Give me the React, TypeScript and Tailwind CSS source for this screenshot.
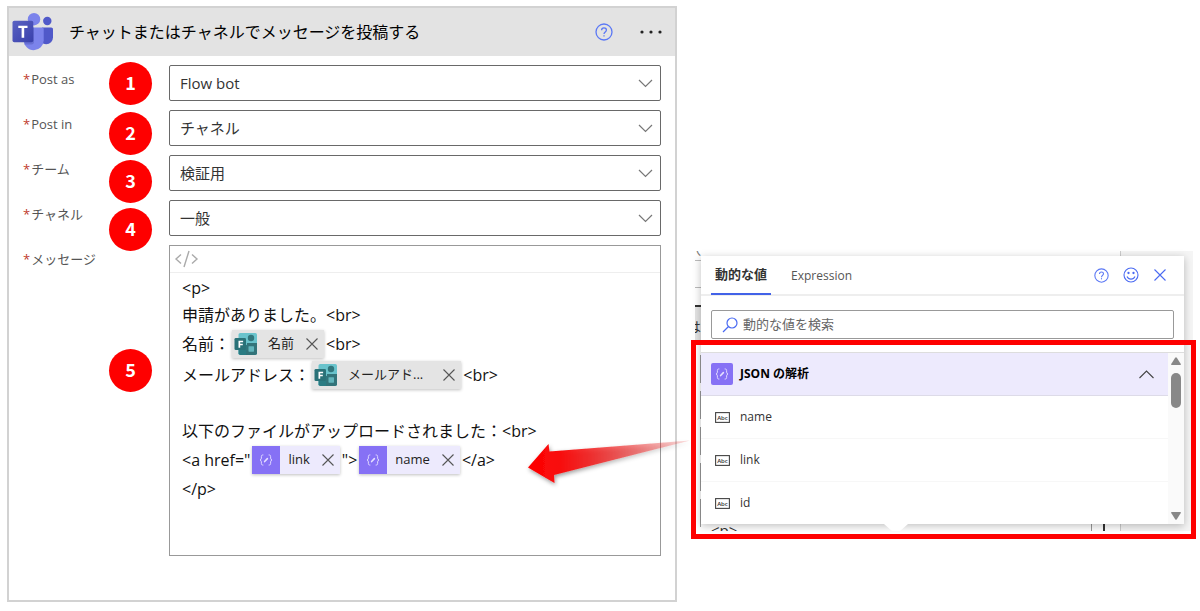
import { useState } from "react";
import type { ReactNode } from "react";

interface Field {
  id: string;
  label: string;
  options: string[];
}

const FIELDS: Field[] = [
  { id: "post-as", label: "Post as", options: ["Flow bot", "User"] },
  { id: "post-in", label: "Post in", options: ["チャネル", "グループ チャット"] },
  { id: "team", label: "チーム", options: ["検証用"] },
  { id: "channel", label: "チャネル", options: ["一般"] },
];

const VALUES = ["name", "link", "id"];

function TeamsLogo() {
  return (
    <svg width="42" height="40" viewBox="0 0 42 40" aria-hidden="true">
      <defs>
        <linearGradient id="teams-tile" x1="0" y1="0" x2="1" y2="1">
          <stop offset="0" stopColor="#5a62c3" />
          <stop offset="1" stopColor="#3940ab" />
        </linearGradient>
      </defs>
      <circle cx="35.3" cy="9" r="4.2" fill="#5059c9" />
      <path d="M30 15.5h9.2c1 0 1.8.8 1.8 1.8v8.2a6.8 6.8 0 0 1-6.8 6.8c-2 0-3.6-.8-4.2-2z" fill="#5059c9" />
      <circle cx="22" cy="7.2" r="6.2" fill="#7b83eb" />
      <path d="M13 15.5h17c1 0 1.7.8 1.7 1.7v11a10 10 0 0 1-10 10c-5.5 0-9.9-4.5-9.9-10V16.5z" fill="#7b83eb" />
      <path d="M12 15.5h10v14.5c0 1.5-1 2.5-2.5 2.5h-7z" fill="#4f57b5" opacity=".45" />
      <rect x=".5" y="8.7" width="20.8" height="21.5" rx="1.8" fill="url(#teams-tile)" />
      <path d="M6.3 13.7h9.2v2.3h-3.3v9.7H9.6V16H6.3z" fill="#fff" />
    </svg>
  );
}

function FormsLogo() {
  return (
    <svg width="24" height="24" viewBox="0 0 24 24" aria-hidden="true">
      <rect x="4.5" y="1" width="18.5" height="22" rx="1.8" fill="#69c3cc" />
      <path d="M4.5 13H13v10H6.3a1.8 1.8 0 0 1-1.8-1.8z" fill="#2b7c83" />
      <path d="M13 11h10v10.2a1.8 1.8 0 0 1-1.8 1.8H12z" fill="#33747a" />
      <circle cx="17" cy="6" r="3.2" fill="#31767c" />
      <rect x="14.5" y="14.2" width="5.5" height="5.5" rx=".6" fill="#62b5bc" />
      <rect x=".5" y="6" width="11.5" height="12" rx="1.3" fill="#2a7278" />
      <path d="M4.5 8.8h4.6v1.5H6.2v1.4h2.6v1.5H6.2v2.6H4.5z" fill="#fff" />
    </svg>
  );
}

function BracesIcon() {
  return (
    <svg
      width="14"
      height="12"
      viewBox="0 0 15 13"
      fill="none"
      stroke="#e6e0ff"
      strokeWidth="1"
      strokeLinecap="round"
      aria-hidden="true"
    >
      <path d="M4.2 1C2.8 1 2.5 1.7 2.5 2.8v1.7c0 1-.5 1.700-1.500 2 1 .3 1.500 1 1.500 2v1.700c0 1.100.3 1.800 1.700 1.800" />
      <path d="M10.8 1c1.400 0 1.700.7 1.700 1.800v1.700c0 1 .5 1.700 1.500 2-1 .3-1.500 1-1.500 2v1.700c0 1.100-.3 1.800-1.700 1.800" />
      <path d="M6 8.200l3-3.200" strokeWidth="1.700" />
    </svg>
  );
}

function HelpIcon({ size }: { size: number }) {
  return (
    <svg width={size} height={size} viewBox="0 0 18 18" fill="none" stroke="#5b78f5" strokeWidth="1.3" aria-hidden="true">
      <circle cx="9" cy="9" r="8" />
      <path d="M6.6 7.200c0-1.500 1-2.400 2.400-2.400s2.400.9 2.400 2.200c0 1.900-2.400 2-2.400 4.100" />
      <path d="M9 12.200v1.400" />
    </svg>
  );
}

function SmileIcon() {
  return (
    <svg width="16" height="16" viewBox="0 0 16 16" fill="none" stroke="#4a6af2" strokeWidth="1.1" aria-hidden="true">
      <circle cx="8" cy="8" r="7" />
      <path d="M4 9.500c.8 1.700 2.200 2.600 4 2.600s3.200-.9 4-2.600" />
      <circle cx="5.5" cy="6" r=".6" fill="#4a6af2" />
      <circle cx="10.5" cy="6" r=".6" fill="#4a6af2" />
    </svg>
  );
}

function CrossIcon({ color }: { color: string }) {
  return (
    <svg width="12" height="12" viewBox="0 0 12 12" stroke={color} strokeWidth="1.1" aria-hidden="true">
      <path d="M.5.5l11 11M11.5.5l-11 11" />
    </svg>
  );
}

function AbcIcon() {
  return (
    <svg width="15" height="11" viewBox="0 0 15 11" aria-hidden="true">
      <rect x=".6" y=".6" width="13.8" height="9.8" fill="#fff" stroke="#444" strokeWidth="1.1" />
      <text x="7.5" y="7.8" textAnchor="middle" fontSize="6" fontWeight="600" fill="#333" fontFamily="Open Sans, sans-serif">
        Abc
      </text>
    </svg>
  );
}

function Token({ label, kind }: { label: string; kind: "forms" | "json" }) {
  const isJson = kind === "json";
  return (
    <span
      className={`mx-0.5 inline-flex h-7 items-center pr-1.5 text-[13px] text-[#222] shadow-[0_1px_3px_rgba(0,0,0,0.25)] ${
        isJson ? "bg-[#edeafd]" : "bg-[#e4e4e4]"
      }`}
    >
      <span className={`flex h-7 w-7 items-center justify-center ${isJson ? "bg-[#8671f5]" : ""}`}>
        {isJson ? <BracesIcon /> : <FormsLogo />}
      </span>
      <span className="ml-2">{label}</span>
      <button type="button" aria-label={`${label} を削除`} className={label.length > 4 ? "ml-5" : "ml-3"}>
        <CrossIcon color="#555" />
      </button>
    </span>
  );
}

function Line({ children, tall = false }: { children?: ReactNode; tall?: boolean }) {
  return <div className={`flex items-center whitespace-pre ${tall ? "h-[31px]" : "h-[27px]"}`}>{children}</div>;
}

function FieldLabel({ id, children }: { id: string; children: string }) {
  return (
    <label id={`${id}-label`} htmlFor={id} className="w-[146px] shrink-0 pt-1 text-[13px] leading-5 text-[#555]">
      <span className="mr-px text-[#c0392b]">*</span>
      {children}
    </label>
  );
}

function Badge({ n, className = "" }: { n: number; className?: string }) {
  return (
    <li
      className={`flex h-[43px] w-[43px] items-center justify-center rounded-full bg-[#fe0000] pb-1 font-['Noto_Sans_CJK_JP',sans-serif] text-lg leading-none font-bold text-white ${className}`}
    >
      {n}
    </li>
  );
}

function ActionCard() {
  return (
    <section className="min-w-0 flex-1 border-2 border-[#d2d2d2] bg-white pb-11">
      <header className="flex h-12 items-center bg-[#e3e3e3] pr-3 pl-[3px]">
        <TeamsLogo />
        <h1 className="ml-[15px] flex-1 text-base whitespace-nowrap text-black">チャットまたはチャネルでメッセージを投稿する</h1>
        <button type="button" aria-label="ヘルプ" className="mr-6.5">
          <HelpIcon size={18} />
        </button>
        <button type="button" aria-label="メニュー">
          <svg width="24" height="4" viewBox="0 0 24 4" fill="#222" aria-hidden="true">
            <circle cx="3" cy="2" r="1.6" />
            <circle cx="12" cy="2" r="1.6" />
            <circle cx="21" cy="2" r="1.6" />
          </svg>
        </button>
      </header>

      <div className="relative flex flex-col gap-[9px] px-3.5 pt-[9px]">
        {FIELDS.map((f) => (
          <div key={f.id} className="flex">
            <FieldLabel id={f.id}>{f.label}</FieldLabel>
            <div className="relative flex-1">
              <select
                id={f.id}
                className="block h-9 w-full appearance-none rounded-xs border border-[#696969] bg-white px-2.5 text-[15px] text-[#333]"
              >
                {f.options.map((o) => (
                  <option key={o}>{o}</option>
                ))}
              </select>
              <svg
                className="pointer-events-none absolute top-3.5 right-2"
                width="15"
                height="9"
                viewBox="0 0 15 9"
                fill="none"
                stroke="#777"
                strokeWidth="1.2"
                aria-hidden="true"
              >
                <path d="M1 1l6.500 6.500L14 1" />
              </svg>
            </div>
          </div>
        ))}

        <div className="flex">
          <FieldLabel id="message">メッセージ</FieldLabel>
          <div className="min-h-[311px] min-w-0 flex-1 border border-[#999]">
            <div className="flex h-[27px] items-center border-b border-[#eee] pl-1">
              <button type="button" aria-label="コード ビュー">
                <svg width="25" height="18" viewBox="0 0 25 18" fill="none" stroke="#aaa" strokeWidth="1.4" aria-hidden="true">
                  <path d="M7 4.500L2 9l5 4.500M18 4.500L23 9l-5 4.500M15 1l-5 16" />
                </svg>
              </button>
            </div>
            <div
              id="message"
              role="textbox"
              aria-multiline="true"
              aria-labelledby="message-label"
              className="px-3 pt-px text-base text-[#111]"
            >
              <Line>{"<p>"}</Line>
              <Line>{"申請がありました。<br>"}</Line>
              <Line tall>
                名前：
                <Token label="名前" kind="forms" />
                {"<br>"}
              </Line>
              <Line tall>
                メールアドレス：
                <Token label="メールアド..." kind="forms" />
                {"<br>"}
              </Line>
              <Line />
              <Line>{"以下のファイルがアップロードされました：<br>"}</Line>
              <Line tall>
                {'<a href="'}
                <Token label="link" kind="json" />
                {'">'}
                <Token label="name" kind="json" />
                {"</a>"}
              </Line>
              <Line>{"</p>"}</Line>
            </div>
          </div>
        </div>

        {/* Step numbers laid over the form */}
        <ol className="pointer-events-none absolute top-1.5 left-[100px] flex flex-col gap-[5px]">
          <Badge n={1} />
          <Badge n={2} className="mt-0.5" />
          <Badge n={3} />
          <Badge n={4} />
          <Badge n={5} className="mt-[93px]" />
        </ol>
      </div>
    </section>
  );
}

// Sliver of the editor that shows around the popup
function Backdrop() {
  return (
    <div aria-hidden="true" className="absolute top-0 right-[3px] left-1 h-[280px] overflow-hidden bg-white text-[#333]">
      <div className="absolute inset-y-0 right-0 w-[73px] border-l border-[#ccc] bg-[#f5f5f5]" />
      <span className="absolute -top-3 -left-2 text-sm text-[#777]">択</span>
      <div className="absolute top-[9px] left-0 h-px w-2 bg-[#bbb]" />
      <div className="absolute top-9 left-0 h-px w-2 bg-[#bbb]" />
      <div className="absolute top-[54px] left-0 h-9 w-2 border-t-2 border-[#333] bg-[#e3e3e3]" />
      <span className="absolute top-[66px] -left-2 text-sm">は</span>
      <div className="absolute top-[104px] left-[5px] flex flex-col gap-2">
        <div className="h-7 w-px bg-[#999]" />
        <div className="h-7 w-px bg-[#999]" />
        <div className="h-7 w-px bg-[#999]" />
        <div className="h-7 w-px bg-[#999]" />
        <div className="h-7 w-px bg-[#999]" />
      </div>
      <span className="absolute top-[268px] left-4 text-[15px]">{"<p>"}</span>
      <div className="absolute top-[270px] right-[101px] h-3 w-px bg-[#999]" />
      <div className="absolute top-[270px] right-[88px] h-3 w-0.5 bg-[#333]" />
    </div>
  );
}

function DynamicPanel() {
  const [open, setOpen] = useState(true);

  return (
    <aside className="relative mt-[245px] w-[505px] shrink-0 pt-[5px] pr-3 pl-2.5">
      <Backdrop />

      <div className="relative bg-white text-xs text-[#333] shadow-[0_2px_8px_rgba(0,0,0,0.25)]">
        <div className="flex h-10 items-stretch border-b-2 border-[#eee] px-2.5">
          <div role="tablist" className="flex flex-1">
            <button
              type="button"
              role="tab"
              aria-selected="true"
              className="-mb-px border-b-2 border-[#4262e8] px-1 text-[13px] font-bold"
            >
              動的な値
            </button>
            <button type="button" role="tab" aria-selected="false" className="ml-4 px-1 pt-0.5 text-[#555]">
              Expression
            </button>
          </div>
          <div className="flex items-center gap-3.5 pr-2">
            <button type="button" aria-label="ヘルプ">
              <HelpIcon size={15} />
            </button>
            <button type="button" aria-label="フィードバック">
              <SmileIcon />
            </button>
            <button type="button" aria-label="閉じる" className="ml-px">
              <CrossIcon color="#4a6af2" />
            </button>
          </div>
        </div>

        <div className="px-2.5 pt-3.5 pb-[13px]">
          <label className="flex h-[29px] items-center rounded-xs border border-[#999] pl-2.5">
            <svg width="16" height="16" viewBox="0 0 16 16" fill="none" stroke="#4a6af2" strokeWidth="1.2" aria-hidden="true">
              <circle cx="10" cy="6" r="5" />
              <path d="M6.500 9.500L1 15" />
            </svg>
            <input
              type="text"
              aria-label="動的な値を検索"
              placeholder="動的な値を検索"
              className="ml-[5px] min-w-0 flex-1 text-[13px] outline-none placeholder:text-[#666]"
            />
          </label>
        </div>

        <div className="flex border-t border-[#ddd]">
          <div className="min-w-0 flex-1">
            <button
              type="button"
              aria-expanded={open}
              onClick={() => setOpen(!open)}
              className="flex h-[43px] w-full items-center border-b border-[#dddbe8] bg-[#edeafd] pr-3.5 pl-2.5"
            >
              <span className="flex h-[22px] w-[22px] items-center justify-center rounded-xs bg-[#8671f5]">
                <BracesIcon />
              </span>
              <span className="ml-[7px] flex-1 text-left font-bold text-black">JSON の解析</span>
              <svg width="15" height="9" viewBox="0 0 15 9" fill="none" stroke="#444" strokeWidth="1.1" aria-hidden="true">
                <path d="M.5 8l7-7 7 7" />
              </svg>
            </button>
            {open && (
              <ul>
                {VALUES.map((v) => (
                  <li key={v} className="border-b border-[#f7f7f7] last:border-0">
                    <button type="button" className="flex h-[42px] w-full items-center pl-3.5">
                      <AbcIcon />
                      <span className="ml-2.5">{v}</span>
                    </button>
                  </li>
                ))}
              </ul>
            )}
          </div>
          {/* Scroll bar */}
          <div className="flex w-4 flex-col items-center bg-[#fafafa] py-1">
            <svg width="10" height="8" viewBox="0 0 10 8" fill="#888" aria-hidden="true">
              <path d="M4.200.8a1 1 0 0 1 1.600 0L9.800 7a.7.7 0 0 1-.6 1H.8a.7.7 0 0 1-.6-1z" />
            </svg>
            <div className="mt-2 h-[35px] w-2.5 rounded-full bg-[#888]" />
            <svg className="mt-auto" width="10" height="8" viewBox="0 0 10 8" fill="#888" aria-hidden="true">
              <path d="M4.200 7.200a1 1 0 0 0 1.600 0L9.800 1a.7.7 0 0 0-.6-1H.8a.7.7 0 0 0-.6 1z" />
            </svg>
          </div>
        </div>

        {/* Callout beak */}
        <svg className="absolute top-full left-[183px]" width="24" height="7" viewBox="0 0 24 7" fill="#fff" aria-hidden="true">
          <path d="M0 0h24l-8 7H8z" />
        </svg>
      </div>

      {/* Highlight frame and arrow */}
      <div className="pointer-events-none absolute inset-x-0 top-[89px] h-[199px] border-5 border-[#fe0000]" />
      <svg
        className="pointer-events-none absolute top-[181px] -left-[171px]"
        width="171"
        height="64"
        viewBox="0 0 171 64"
        aria-hidden="true"
      >
        <defs>
          <linearGradient id="arrow-fade" x1="0" y1="0" x2="1" y2="0">
            <stop offset="0" stopColor="#fe0000" />
            <stop offset=".2" stopColor="#f80d0d" />
            <stop offset="1" stopColor="#e02020" stopOpacity=".15" />
          </linearGradient>
          <filter id="arrow-shadow" x="-10%" y="-20%" width="120%" height="150%">
            <feDropShadow dx="1" dy="2" stdDeviation="2" floodOpacity=".4" />
          </filter>
        </defs>
        <path d="M8 35.500L28.500 12l1 7.500L170 8.500 34 43l.5 8z" fill="url(#arrow-fade)" filter="url(#arrow-shadow)" />
      </svg>
    </aside>
  );
}

export default function App() {
  return (
    <main className="flex items-start gap-3.5 bg-white pt-1.5 pr-1 pb-2 pl-[7px] font-['Open_Sans','Noto_Sans_CJK_JP',sans-serif]">
      <ActionCard />
      <DynamicPanel />
    </main>
  );
}
